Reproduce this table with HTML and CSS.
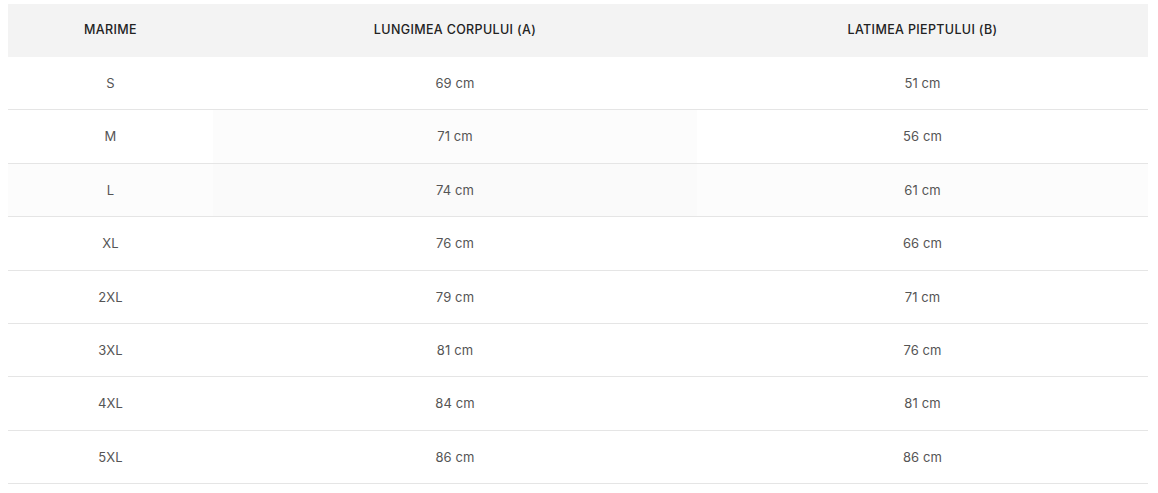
FILE: index.html
```html
<!DOCTYPE html>
<html lang="ro">
<head>
<meta charset="utf-8">
<title>Tabel marimi</title>
<link rel="stylesheet" href="styles.css">
</head>
<body>
<table class="size-table">
  <colgroup>
    <col class="c1"><col class="c2"><col class="c3">
  </colgroup>
  <thead>
    <tr><th>MARIME</th><th>LUNGIMEA CORPULUI (A)</th><th>LATIMEA PIEPTULUI (B)</th></tr>
  </thead>
  <tbody>
    <tr><td>S</td><td>69 cm</td><td>51 cm</td></tr>
    <tr><td>M</td><td class="col-hl">71 cm</td><td>56 cm</td></tr>
    <tr class="row-hl"><td>L</td><td class="col-hl">74 cm</td><td>61 cm</td></tr>
    <tr><td>XL</td><td>76 cm</td><td>66 cm</td></tr>
    <tr><td>2XL</td><td>79 cm</td><td>71 cm</td></tr>
    <tr><td>3XL</td><td>81 cm</td><td>76 cm</td></tr>
    <tr><td>4XL</td><td>84 cm</td><td>81 cm</td></tr>
    <tr><td>5XL</td><td>86 cm</td><td>86 cm</td></tr>
  </tbody>
</table>
</body>
</html>
```

FILE: styles.css
```css
html, body {
  margin: 0;
  background: #ffffff;
}
body {
  padding: 4px 10px 0 8px;
  font-family: Inter, "Noto Sans", sans-serif;
}
.size-table {
  width: 1140px;
  border-collapse: collapse;
  table-layout: fixed;
}
.c1 { width: 205px; }
.c2 { width: 484px; }
.c3 { width: 451px; }
.size-table th {
  background: #f3f3f3;
  color: #222222;
  font-size: 12.5px;
  font-weight: 500;
  letter-spacing: 0.35px;
  line-height: 22.4px;
  padding: 15px 0 15.6px;
  text-align: center;
}
.size-table td {
  color: #555555;
  font-size: 13px;
  font-weight: 400;
  letter-spacing: 0.1px;
  line-height: 22.4px;
  padding: 15px 0;
  text-align: center;
  border-bottom: 1px solid #e5e5e5;
}
.size-table td.col-hl { background: #fcfcfc; }
.size-table tr.row-hl td { background: #fcfcfc; }
.size-table tr.row-hl td.col-hl { background: #fafafa; }
```
